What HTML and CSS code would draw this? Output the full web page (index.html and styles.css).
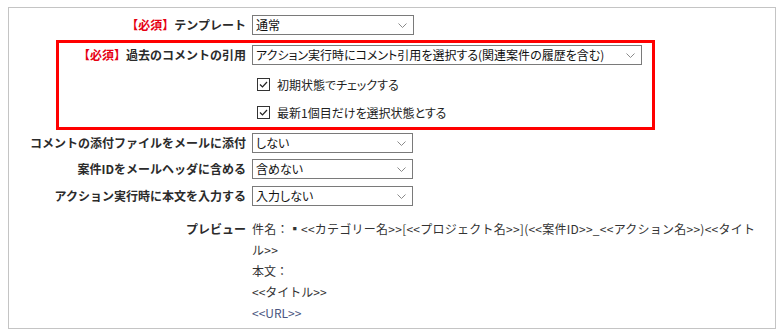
FILE: index.html
```html
<!DOCTYPE html>
<html lang="ja">
<head>
    <meta charset="UTF-8">
    <title>アクション設定</title>
    <link rel="stylesheet" href="styles.css">
</head>
<body>
    <div class="panel">
        <div class="row row-template">
            <div class="label"><span class="req">【必須】</span>テンプレート</div>
            <div class="field">
                <span class="sel"><select class="w162"><option>通常</option></select><svg class="chev" viewBox="0 0 9 5"><path d="M0.5 0.5 L4.5 4.5 L8.5 0.5"/></svg></span>
            </div>
        </div>

        <!-- highlighted setting -->
        <div class="highlight">
            <div class="row">
                <div class="label"><span class="req">【必須】</span>過去のコメントの引用</div>
                <div class="field">
                    <span class="sel"><select class="w390"><option>アクション実行時にコメント引用を選択する(関連案件の履歴を含む)</option></select><svg class="chev" viewBox="0 0 9 5"><path d="M0.5 0.5 L4.5 4.5 L8.5 0.5"/></svg></span>
                </div>
            </div>
            <div class="row opt-row">
                <div></div>
                <label class="check"><svg class="box" viewBox="0 0 13 13"><rect x="0.5" y="0.5" width="12" height="12"/><path d="M3 6.5 L5.5 9 L10 4"/></svg>初期状態でチェックする</label>
            </div>
            <div class="row opt-row second">
                <div></div>
                <label class="check"><svg class="box" viewBox="0 0 13 13"><rect x="0.5" y="0.5" width="12" height="12"/><path d="M3 6.5 L5.5 9 L10 4"/></svg>最新1個目だけを選択状態とする</label>
            </div>
        </div>

        <div class="row row-attach">
            <div class="label">コメントの添付ファイルをメールに添付</div>
            <div class="field">
                <span class="sel"><select class="w161"><option>しない</option></select><svg class="chev" viewBox="0 0 9 5"><path d="M0.5 0.5 L4.5 4.5 L8.5 0.5"/></svg></span>
            </div>
        </div>
        <div class="row row-header">
            <div class="label">案件IDをメールヘッダに含める</div>
            <div class="field">
                <span class="sel"><select class="w161"><option>含めない</option></select><svg class="chev" viewBox="0 0 9 5"><path d="M0.5 0.5 L4.5 4.5 L8.5 0.5"/></svg></span>
            </div>
        </div>
        <div class="row row-body">
            <div class="label">アクション実行時に本文を入力する</div>
            <div class="field">
                <span class="sel"><select class="w161"><option>入力しない</option></select><svg class="chev" viewBox="0 0 9 5"><path d="M0.5 0.5 L4.5 4.5 L8.5 0.5"/></svg></span>
            </div>
        </div>

        <div class="row preview">
            <div class="label">プレビュー</div>
            <div class="preview-text">
                <div class="subject">件名：▪&lt;&lt;カテゴリー名&gt;&gt;[&lt;&lt;プロジェクト名&gt;&gt;](&lt;&lt;案件ID&gt;&gt;_&lt;&lt;アクション名&gt;&gt;)&lt;&lt;タイトル&gt;&gt;</div>
                <div>本文：</div>
                <div>&lt;&lt;タイトル&gt;&gt;</div>
                <div class="url">&lt;&lt;URL&gt;&gt;</div>
            </div>
        </div>
    </div>
</body>
</html>
```

FILE: styles.css
```css
body { margin: 0; background: #fff; font-family: "Noto Sans CJK JP", "Noto Sans", sans-serif; font-size: 12px; color: #333; }
.panel {
    margin: 7px 3px 0 8px;
    height: 322px;
    box-sizing: border-box;
    border: 1px solid #c4c4c4;
    padding-top: 7px;
}
.row { display: grid; grid-template-columns: 237px 1fr; column-gap: 6px; align-items: center; height: 20px; }
.label { text-align: right; font-weight: bold; white-space: nowrap; line-height: 20px; color: #2b2b2b; }
.req { color: #e60012; }
.field { display: flex; }

.sel { position: relative; display: inline-block; height: 20px; }
.sel select {
    appearance: none;
    -webkit-appearance: none;
    height: 20px;
    margin: 0;
    border: 1px solid #7a7a7a;
    border-radius: 0;
    background: #fff;
    color: #111;
    font-family: inherit;
    font-size: 12px;
    font-feature-settings: "palt";
    padding: 0 20px 0 3px;
    line-height: 18px;
}
.w162 { width: 162px; }
.w161 { width: 161px; }
.w390 { width: 390px; }
.chev { position: absolute; right: 7px; top: 8px; width: 9px; height: 5px; fill: none; stroke: #8a8a8a; stroke-width: 1; pointer-events: none; }

.row-template { margin-bottom: 5px; }
.highlight {
    margin-left: 47px;
    width: 599px;
    box-sizing: border-box;
    border: 3px solid #ff0000;
    padding: 2px 0 5px;
}
.highlight .row { grid-template-columns: 187px 1fr; }
.opt-row { margin-top: 9px; }
.opt-row.second { margin-top: 8px; }
.check { display: flex; align-items: center; gap: 7px; margin-left: 5px; color: #222; font-feature-settings: "palt"; }
.box { width: 13px; height: 13px; fill: #fff; stroke: #333; stroke-width: 1; }
.box path { fill: none; stroke: #222; stroke-width: 1.2; }

.row-attach { margin-top: 3px; }
.row-header { margin-top: 6px; }
.row-body { margin-top: 7px; }

.preview { margin-top: 12px; height: auto; align-items: start; }
.preview .label { line-height: 21px; }
.preview-text { line-height: 21px; color: #333; padding-right: 14px; }
.subject { letter-spacing: 0.25px; }
.url { color: #4a5580; }
```
